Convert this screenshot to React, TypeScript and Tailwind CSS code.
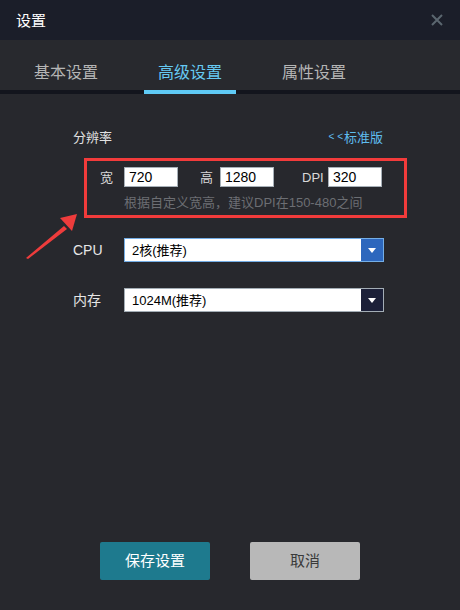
import React from "react";

const font = { fontFamily: '"Liberation Sans", "Noto Sans CJK SC", sans-serif' };

function Select({ value, focused }: { value: string; focused?: boolean }) {
  return (
    <div
      className={
        "flex h-[24px] w-[260px] bg-white border " +
        (focused ? "border-[#74aee6]" : "border-[#a3adb5]")
      }
    >
      <div className="flex-1 flex items-center pl-[7px] text-[13px] text-black leading-none">{value}</div>
      <div
        className={
          "w-[22px] h-full flex items-center justify-center " +
          (focused ? "bg-[#2d67bd]" : "bg-[#1c2038]")
        }
      >
        <svg width="8" height="5" viewBox="0 0 8 5">
          <polygon points="0,0 8,0 4,5" fill="#ffffff" />
        </svg>
      </div>
    </div>
  );
}

function Field({ value }: { value: string }) {
  return (
    <div className="w-[54px] h-[20px] bg-white border border-[#a7b0b8] flex items-center pl-[4px] text-[14px] text-black leading-none">
      {value}
    </div>
  );
}

export default function App() {
  return (
    <div className="relative w-[460px] h-[610px] flex flex-col bg-[#27282d] overflow-hidden" style={font}>
      {/* title bar */}
      <div className="h-[40px] bg-[#1b1e29] flex items-center justify-between pl-[16px] pr-[17px]">
        <span className="text-[15px] text-white leading-none">设置</span>
        <svg width="12" height="12" viewBox="0 0 12 12">
          <path d="M1 1 L11 11 M11 1 L1 11" stroke="#5b666f" strokeWidth="2" />
        </svg>
      </div>
      {/* tabs */}
      <div className="h-[50px] bg-[#28292e] flex pl-[20px] gap-[32px]">
        <div className="w-[92px] flex items-end justify-center pb-[9px] text-[16px] leading-[16px] text-[#b5b5b5]">基本设置</div>
        <div className="w-[92px] flex items-end justify-center pb-[9px] text-[16px] leading-[16px] text-[#66c9f3]">高级设置</div>
        <div className="w-[92px] flex items-end justify-center pb-[9px] text-[16px] leading-[16px] text-[#b5b5b5]">属性设置</div>
      </div>
      <div className="h-[4px] bg-[#13151d] flex">
        <div className="ml-[144px] w-[92px] h-full bg-[#5fcaf5]" />
      </div>
      {/* body */}
      <div className="flex-1 flex flex-col pl-[73px] pt-[33px]">
        <div className="w-[310px] h-[20px] flex items-center justify-between">
          <span className="text-[13px] text-[#e2e2e2] leading-none">分辨率</span>
          <span className="flex items-center text-[13px] text-[#5fbdef] leading-none">
            <span className="text-[10px] mr-[1px]">&lt; &lt;</span>标准版
          </span>
        </div>
        <div className="ml-[11px] mt-[11px] w-[323px] h-[60px] border-[3px] border-[#f23b3b] pl-[13px] pt-[6px] flex flex-col">
          <div className="flex items-center h-[20px] text-[13px] text-[#d8d8d8]">
            <span className="w-[24px] leading-none">宽</span>
            <Field value="720" />
            <span className="ml-[22px] w-[20px] leading-none">高</span>
            <Field value="1280" />
            <span className="ml-[28px] w-[26px] leading-none">DPI</span>
            <Field value="320" />
          </div>
          <div className="mt-[8px] pl-[24px] text-[13px] leading-[16px] text-[#6c6e73]">
            根据自定义宽高，建议DPI在150-480之间
          </div>
        </div>
        <div className="mt-[20px] flex items-center">
          <span className="w-[51px] text-[14px] text-[#e6e6e6] leading-none">CPU</span>
          <Select value="2核(推荐)" focused />
        </div>
        <div className="mt-[26px] flex items-center">
          <span className="w-[51px] text-[14px] text-[#e6e6e6] leading-none">内存</span>
          <Select value="1024M(推荐)" />
        </div>
      </div>
      {/* buttons */}
      <div className="flex justify-center gap-[40px] pb-[30px]">
        <button className="w-[110px] h-[38px] rounded-[2px] bg-[#1e7a8e] text-white text-[15px]">保存设置</button>
        <button className="w-[110px] h-[38px] rounded-[2px] bg-[#b8b8b8] text-[#3a3a3a] text-[15px]">取消</button>
      </div>
      {/* annotation arrow */}
      <svg className="absolute left-0 top-0 pointer-events-none" width="460" height="610" viewBox="0 0 460 610">
        <polygon points="26,258 64,226 67,229 28,259" fill="#ee3c3c" />
        <polygon points="77,214 60,218 72,231" fill="#ee3c3c" />
      </svg>
    </div>
  );
}
